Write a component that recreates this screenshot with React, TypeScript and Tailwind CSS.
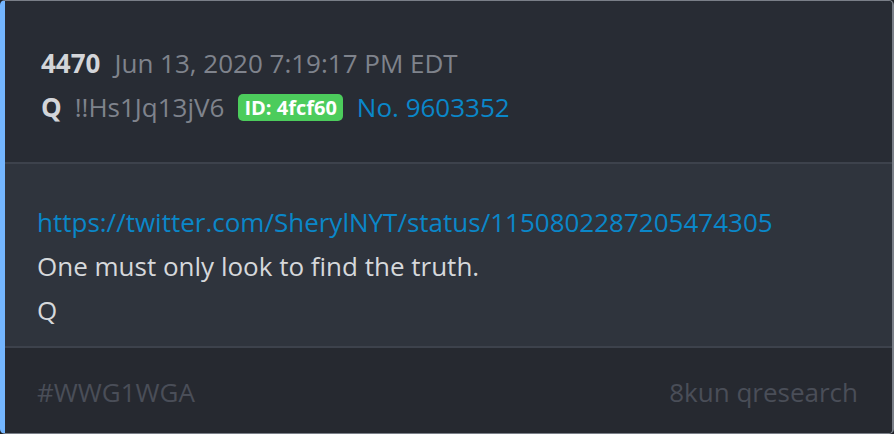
import React from "react";

const App = () => {
  return (
    <div className="w-[894px] h-[434px] bg-[#1f2228] font-['Open_Sans',sans-serif]">
      <div className="h-full flex flex-col overflow-hidden rounded-[5px] border border-[#7a7f88] border-r-2 border-l-[5px] border-l-[#74b6ff]">
        <div className="h-[161px] shrink-0 bg-[#282c34] pt-[40px] pl-[36px] text-[26px] leading-[44px]">
          <div className="flex items-center gap-[14px]">
            <span className="font-bold text-[#d3d5d9]">4470</span>
            <span className="text-[#7f838c]">Jun 13, 2020 7:19:17 PM EDT</span>
          </div>
          <div className="flex items-center">
            <span className="font-bold text-[#d3d5d9]">Q</span>
            <span className="ml-[13px] text-[#7f838c]">!!Hs1Jq13jV6</span>
            <span className="ml-[14px] rounded-[5px] bg-[#4ccc5c] px-[6px] text-[20px] leading-[27px] font-bold text-white">
              ID: 4fcf60
            </span>
            <a className="ml-[14px] text-[#0a87c9]">No. 9603352</a>
          </div>
        </div>
        <div className="h-[2px] shrink-0 bg-[#3d424c]" />
        <div className="h-[182px] shrink-0 bg-[#2f343d] pt-[36px] pl-[32px] text-[26px] leading-[44px] text-[#d6d8db]">
          <a className="block text-[#0a87c9]">https://twitter.com/SherylNYT/status/1150802287205474305</a>
          <p>One must only look to find the truth.</p>
          <p>Q</p>
        </div>
        <div className="h-[2px] shrink-0 bg-[#3d424c]" />
        <div className="flex flex-1 items-center justify-between bg-[#262930] pt-[3px] pl-[32px] pr-[34px] text-[26px] text-[#4a4e58]">
          <span>#WWG1WGA</span>
          <span>8kun qresearch</span>
        </div>
      </div>
    </div>
  );
};

export default App;
